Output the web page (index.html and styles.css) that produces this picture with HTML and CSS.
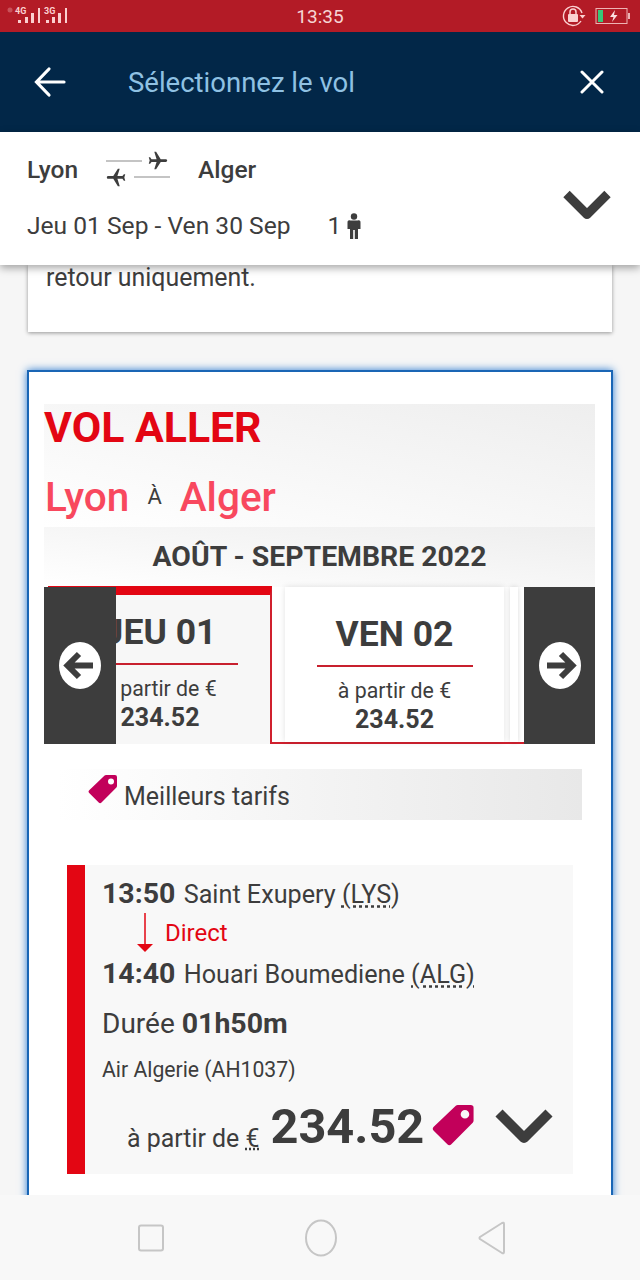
FILE: index.html
```html
<!DOCTYPE html>
<html lang="fr">
<head>
  <meta charset="UTF-8">
  <meta name="viewport" content="width=device-width, initial-scale=1.0">
  <title>Sélectionnez le vol</title>
  <link rel="stylesheet" href="styles.css">
</head>
<body>
  <!-- Status bar -->
  <div class="status">
    <svg class="signal" width="72" height="32" viewBox="0 0 72 32">
      <circle cx="10" cy="10" r="2.5" fill="#c9525a"/>
      <text x="15" y="14" class="signal-text">4G</text>
      <g fill="#fbd0d0">
        <rect x="18" y="20" width="3" height="3"/>
        <rect x="25" y="17" width="3" height="6"/>
        <rect x="31" y="13" width="3" height="10"/>
        <rect x="38" y="8" width="2" height="15"/>
      </g>
      <text x="44" y="14" class="signal-text">3G</text>
      <g fill="#fbd0d0">
        <rect x="46" y="20" width="3" height="3"/>
        <rect x="52" y="17" width="3" height="6"/>
        <rect x="58" y="13" width="3" height="10"/>
        <rect x="65" y="8" width="2" height="15"/>
      </g>
    </svg>
    <div class="clock">13:35</div>
    <div class="status-right">
      <svg width="24" height="24" viewBox="0 0 24 24">
        <path d="M19 17a9.5 9.5 0 1 1 1-8" fill="none" stroke="#fbd0d0" stroke-width="1.4"/>
        <path d="M17.500 11h6l-3 3.500z" fill="#fbd0d0"/>
        <rect x="6" y="10" width="10" height="8" rx="1" fill="#fbd0d0"/>
        <path d="M8 10V8a3 3 0 0 1 6 0v2" fill="none" stroke="#fbd0d0" stroke-width="1.500"/>
      </svg>
      <svg width="36" height="18" viewBox="0 0 36 18">
        <rect x="1" y="1.500" width="31" height="15" fill="none" stroke="#eeb4b4" stroke-width="1"/>
        <rect x="3" y="3" width="5" height="12" fill="#38c878"/>
        <path d="M20 3l-5 7h3.500l-1.500 5 5.500-7h-3.500z" fill="#fbe0e0"/>
        <rect x="33" y="6" width="2" height="6" fill="#eeb4b4"/>
      </svg>
    </div>
  </div>

  <!-- App bar -->
  <header class="appbar">
    <svg class="appbar-back" width="34" height="34" viewBox="0 0 34 34">
      <path d="M31 17H4M16 4L3.500 17 16 30" fill="none" stroke="#fff" stroke-width="3.200" stroke-linecap="round"/>
    </svg>
    <h1 class="appbar-title">Sélectionnez le vol</h1>
    <svg width="24" height="24" viewBox="0 0 24 24">
      <path d="M2 2l20 20M22 2L2 22" fill="none" stroke="#fff" stroke-width="3" stroke-linecap="round"/>
    </svg>
  </header>

  <!-- Search summary -->
  <section class="summary">
    <div class="summary-info">
      <div class="summary-route">
        <span>Lyon</span>
        <svg class="route-icon" width="66" height="36" viewBox="0 0 66 36">
          <rect x="1" y="9" width="36" height="2" fill="#c4c4c4"/>
          <rect x="29" y="25" width="36" height="2" fill="#c4c4c4"/>
          <path transform="translate(42 -1) rotate(90 11 11) scale(.92)" d="M21 16v-2l-8-5V3.500c0-.83-.67-1.500-1.500-1.500S10 2.670 10 3.500V9l-8 5v2l8-2.500V19l-2 1.500V22l3.500-1 3.500 1v-1.500L13 19v-5.500l8 2.500z" fill="#3d3d3d"/>
          <path transform="translate(0 15) rotate(-90 11 11) scale(.92)" d="M21 16v-2l-8-5V3.500c0-.83-.67-1.500-1.500-1.500S10 2.670 10 3.500V9l-8 5v2l8-2.500V19l-2 1.500V22l3.500-1 3.500 1v-1.500L13 19v-5.500l8 2.500z" fill="#3d3d3d"/>
        </svg>
        <span>Alger</span>
      </div>
      <div class="summary-dates">
        <span>Jeu 01 Sep - Ven 30 Sep</span>
        <span class="summary-pax">1
          <svg width="14" height="26" viewBox="0 0 14 26">
            <circle cx="7" cy="3.500" r="3.200" fill="#3d3d3d"/>
            <path d="M3.500 7.500h7A2 2 0 0 1 13.500 9.500V16h-2.500v10H7.800v-9H6.200v9H3V16H.5V9.500a2 2 0 0 1 3-2z" fill="#3d3d3d"/>
          </svg>
        </span>
      </div>
    </div>
    <svg class="chevron" width="48" height="32" viewBox="0 0 48 32">
      <path d="M3.500 5L24 25.500 44.500 5" fill="none" stroke="#3d3d3d" stroke-width="9" stroke-linejoin="round"/>
    </svg>
  </section>

  <main class="content">
    <div class="info-card">retour uniquement.</div>

    <div class="flight-card">
      <div class="heading">
        <h2 class="heading-title">VOL ALLER</h2>
        <div class="heading-route">
          <span>Lyon</span><small>À</small><span>Alger</span>
        </div>
      </div>
      <div class="month">AOÛT - SEPTEMBRE 2022</div>

      <!-- Date carousel -->
      <div class="dates">
        <div class="date date-active">
          <div class="date-day">JEU 01</div>
          <div class="date-from">à partir de €</div>
          <div class="date-price">234.52</div>
        </div>
        <div class="date-next">
          <div class="date">
            <div class="date-day">VEN 02</div>
            <div class="date-from">à partir de €</div>
            <div class="date-price">234.52</div>
          </div>
          <div class="date-sliver"></div>
        </div>
        <button class="arrow arrow-left" aria-label="Précédent">
          <svg width="42" height="47" viewBox="0 0 42 47">
            <ellipse cx="21" cy="23.500" rx="21" ry="23.500" fill="#fff"/>
            <path d="M34 23.500H10M20 12L8.500 23.500 20 35" fill="none" stroke="#3d3d3d" stroke-width="6"/>
          </svg>
        </button>
        <button class="arrow arrow-right" aria-label="Suivant">
          <svg width="42" height="47" viewBox="0 0 42 47">
            <ellipse cx="21" cy="23.500" rx="21" ry="23.500" fill="#fff"/>
            <path d="M8 23.500h24M22 12l11.500 11.500L22 35" fill="none" stroke="#3d3d3d" stroke-width="6"/>
          </svg>
        </button>
      </div>

      <div class="best">
        <svg width="30" height="32" viewBox="0 0 30 30">
          <path fill-rule="evenodd" d="M18 1h9a2 2 0 0 1 2 2v9a2 2 0 0 1-.6 1.400L13.500 28.500a2 2 0 0 1-2.800 0L1.200 19a2 2 0 0 1 0-2.800L16.600 1.600A2 2 0 0 1 18 1zM23 4.500a3 3 0 1 0 0 6 3 3 0 0 0 0-6z" fill="#c2005a"/>
        </svg>
        <span>Meilleurs tarifs</span>
      </div>

      <!-- Flight -->
      <div class="flight">
        <div class="flight-row"><b>13:50</b> Saint Exupery <abbr>(LYS)</abbr></div>
        <div class="flight-direct">
          <svg width="16" height="40" viewBox="0 0 16 40">
            <path d="M8 0v32" stroke="#e30613" stroke-width="1.500"/>
            <path d="M0 31h16l-8 8z" fill="#e30613"/>
          </svg>
          <span>Direct</span>
        </div>
        <div class="flight-row"><b>14:40</b> Houari Boumediene <abbr>(ALG)</abbr></div>
        <div class="flight-duration">Durée <b>01h50m</b></div>
        <div class="flight-airline">Air Algerie (AH1037)</div>
        <div class="flight-price">
          <span class="flight-from">à partir de <abbr>€</abbr></span>
          <span class="flight-amount">234.52</span>
          <svg class="flight-tag" width="43" height="44" viewBox="0 0 30 30">
            <path fill-rule="evenodd" d="M18 1h9a2 2 0 0 1 2 2v9a2 2 0 0 1-.6 1.400L13.500 28.500a2 2 0 0 1-2.800 0L1.200 19a2 2 0 0 1 0-2.800L16.600 1.600A2 2 0 0 1 18 1zM23 4.500a3 3 0 1 0 0 6 3 3 0 0 0 0-6z" fill="#c2005a"/>
          </svg>
          <svg class="flight-chevron" width="58" height="38" viewBox="0 0 58 38">
            <path d="M4 7l25 25L54 7" fill="none" stroke="#3d3d3d" stroke-width="10" stroke-linejoin="round"/>
          </svg>
        </div>
      </div>
    </div>
  </main>

  <!-- System nav -->
  <nav class="sysnav">
    <svg width="26" height="28" viewBox="0 0 26 28">
      <rect x="1" y="1.500" width="24" height="25" rx="2" fill="none" stroke="#c6c6c6" stroke-width="2"/>
    </svg>
    <svg width="32" height="38" viewBox="0 0 32 38">
      <ellipse cx="16" cy="19" rx="15" ry="17.500" fill="none" stroke="#c6c6c6" stroke-width="2"/>
    </svg>
    <svg width="28" height="34" viewBox="0 0 28 34">
      <path d="M26 3v28q0 2-2 1L2 18q-1-1 0-2L24 2q2-1 2 1z" fill="none" stroke="#c6c6c6" stroke-width="2"/>
    </svg>
  </nav>
</body>
</html>
```

FILE: styles.css
```css
* {
  box-sizing: border-box;
}

body {
  margin: 0;
  height: 1280px;
  display: flex;
  flex-direction: column;
  overflow: hidden;
  background-color: #f6f6f6;
  color: #3d3d3d;
  font-family: Roboto, "Liberation Sans", sans-serif;
}

/* status bar */
.status {
  height: 32px;
  flex: none;
  position: relative;
  display: flex;
  justify-content: space-between;
  align-items: center;
  padding-right: 9px;
  background-color: #b31b26;
}

.signal-text {
  font-size: 9px;
  font-weight: 700;
  fill: #fbd0d0;
}

.clock {
  position: absolute;
  left: 0;
  right: 0;
  text-align: center;
  font-size: 19px;
  color: #f6d5d5;
}

.status-right {
  display: flex;
  align-items: center;
  gap: 9px;
}

/* app bar */
.appbar {
  height: 100px;
  flex: none;
  display: flex;
  align-items: center;
  padding: 0 36px 0 33px;
  background-color: #022748;
}

.appbar-back {
  margin-right: 61px;
}

.appbar-title {
  flex: 1;
  margin: 0;
  font-size: 27.500px;
  font-weight: 400;
  color: #8fc1e3;
}

/* summary */
.summary {
  height: 133px;
  flex: none;
  position: relative;
  z-index: 2;
  display: flex;
  justify-content: space-between;
  align-items: center;
  padding: 0 29px 6px 27px;
  background-color: #fff;
  box-shadow: 0 3px 8px rgba(0, 0, 0, 0.35);
}

.summary-route {
  display: flex;
  align-items: center;
  gap: 27px;
  height: 36px;
  margin-bottom: 24px;
  font-size: 24.500px;
  font-weight: 500;
}

.summary-dates {
  display: flex;
  align-items: center;
  gap: 37px;
  font-size: 24.600px;
}

.summary-pax {
  display: flex;
  align-items: center;
  gap: 6px;
}

.chevron {
  margin-top: 18px;
}

/* page content, runs on under the system nav */
.content {
  flex: 1;
  min-height: 0;
  padding: 0 27px;
}

.info-card {
  height: 67px;
  margin: 0 1px 38px;
  padding: 0 18px;
  font-size: 24.900px;
  line-height: 26px;
  background-color: #fff;
  box-shadow: 0 1px 4px rgba(0, 0, 0, 0.4);
}

.flight-card {
  padding: 32px 16px 40px 15px;
  border: 2px solid #1a66b5;
  background-color: #fff;
  box-shadow: 0 0 8px #2a7ad0;
}

.heading {
  height: 123px;
  background: linear-gradient(to top right, #fff, #eee);
}

.heading-title {
  margin: 0;
  padding-top: 2px;
  font-size: 42.800px;
  line-height: 42px;
  font-weight: 700;
  color: #e30613;
}

.heading-route {
  display: flex;
  align-items: center;
  gap: 18px;
  margin-top: 21px;
  padding-left: 1px;
  font-size: 40.500px;
  line-height: 56px;
  font-weight: 500;
  color: #f8485e;
}

.heading-route small {
  font-size: 22px;
  font-weight: 400;
  color: #3d3d3d;
}

.month {
  height: 60px;
  text-align: center;
  font-size: 28.400px;
  line-height: 60px;
  font-weight: 700;
  background: linear-gradient(to top right, #fff, #eee);
}

/* date carousel */
.dates {
  position: relative;
  height: 157px;
  display: flex;
  padding-left: 4px;
  background-color: #fff;
}

.date {
  width: 219px;
  height: 100%;
  padding-top: 27px;
  text-align: center;
  background-color: #fff;
  box-shadow: 0 0 6px rgba(0, 0, 0, 0.12);
}

.date-active {
  width: 224px;
  height: 158px;
  margin-top: -1px;
  padding: 17px 0 0 2px;
  border-top: 9px solid #e30613;
  border-right: 2px solid #d0202e;
  background-color: #f7f7f7;
  box-shadow: none;
}

.date-next {
  width: 253px;
  display: flex;
  gap: 6px;
  padding-left: 13px;
  border-bottom: 2px solid #d0202e;
}

.date-sliver {
  width: 8px;
  box-shadow: 0 0 5px rgba(0, 0, 0, 0.15);
}

.date-day {
  width: 156px;
  margin: 0 auto;
  padding-bottom: 11px;
  border-bottom: 2px solid #c8202e;
  font-size: 35.500px;
  line-height: 40px;
  font-weight: 700;
}

.date-from {
  margin-top: 12px;
  font-size: 21.300px;
  line-height: 24px;
}

.date-price {
  margin-top: 2px;
  font-size: 25px;
  line-height: 30px;
  font-weight: 700;
}

.arrow {
  position: absolute;
  top: 0;
  bottom: 0;
  width: 72px;
  display: flex;
  justify-content: center;
  align-items: center;
  padding: 0;
  border: 0;
  background-color: #3d3d3d;
}

.arrow-left {
  left: 0;
}

.arrow-right {
  right: 0;
  width: 71px;
}

/* best fares */
.best {
  height: 51px;
  display: flex;
  align-items: center;
  gap: 6px;
  margin: 25px 13px 0;
  padding-left: 31px;
  font-size: 25px;
  background: linear-gradient(to right, #fff, #e8e8e8);
}

.best svg {
  margin-top: -12px;
}

.best span {
  margin-top: 3px;
}

/* flight */
.flight {
  height: 309px;
  margin: 45px 22px 0 23px;
  padding: 14px 0 0 17px;
  border-left: 18px solid #e30613;
  background-color: #f8f8f8;
}

.flight-row {
  font-size: 25.200px;
  line-height: 30px;
}

.flight-row b {
  font-weight: 700;
  font-size: 28.500px;
  margin-right: 2px;
}

.flight-direct {
  height: 49px;
  display: flex;
  align-items: center;
  gap: 12px;
  padding: 0 0 3px 35px;
  color: #e30613;
  font-size: 24px;
}

.flight-duration {
  margin-top: 18px;
  font-size: 28px;
  line-height: 32px;
}

.flight-duration b {
  font-size: 28.500px;
  font-weight: 700;
}

.flight-airline {
  margin-top: 16px;
  font-size: 21.200px;
  line-height: 28px;
}

.flight-price {
  display: flex;
  align-items: center;
  margin-top: 14px;
  padding-left: 25px;
}

.flight-from {
  margin: 22px 11px 0 0;
  font-size: 24.900px;
}

.flight-amount {
  font-size: 48.700px;
  line-height: 58px;
  font-weight: 700;
}

.flight-tag {
  margin: 0 0 4px 8px;
}

.flight-chevron {
  margin: 0 0 5px 20px;
}

abbr {
  text-decoration: underline dotted;
}

/* system nav */
.sysnav {
  height: 85px;
  flex: none;
  position: relative;
  z-index: 3;
  display: flex;
  justify-content: space-between;
  align-items: center;
  padding: 0 134px 0 138px;
  background-color: #f8f8f8;
}
```
